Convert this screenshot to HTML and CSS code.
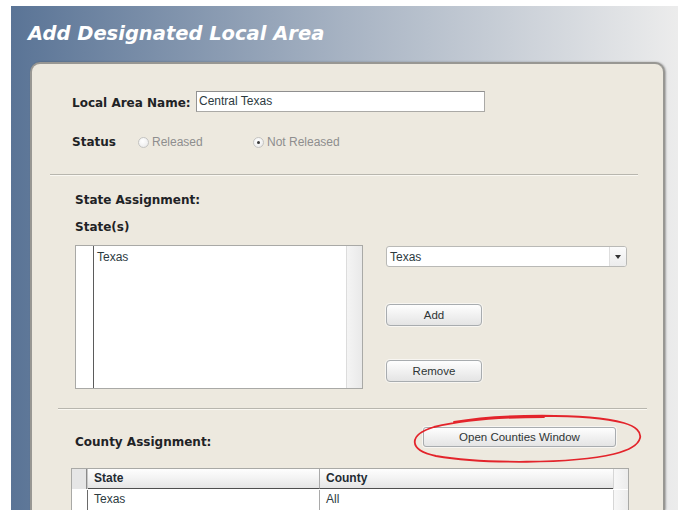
FILE: index.html
```html
<!DOCTYPE html>
<html lang="en">
<head>
<meta charset="utf-8">
<title>Add Designated Local Area</title>
<link rel="stylesheet" href="styles.css">
</head>
<body>
<div class="frame">
  <h1 class="title">Add Designated Local Area</h1>
  <div class="panel">
    <div class="field-row">
      <span class="label name-label">Local Area Name:</span>
      <div class="textbox">Central Texas</div>
    </div>
    <div class="status-row">
      <span class="label status-label">Status</span>
      <span class="radio radio-first"><span class="bullet"></span>Released</span>
      <span class="radio checked"><span class="bullet"></span>Not Released</span>
    </div>
    <div class="rule rule-top"></div>

    <div class="heading heading-first">State Assignment:</div>
    <div class="heading heading-sub">State(s)</div>
    <div class="assign">
      <div class="listbox">
        <div class="gutter"></div>
        <div class="items"><div class="item">Texas</div></div>
        <div class="scroll"></div>
      </div>
      <div class="controls">
        <div class="select"><span class="select-value">Texas</span><span class="arrow"></span></div>
        <button class="btn btn-add" type="button">Add</button>
        <button class="btn btn-remove" type="button">Remove</button>
      </div>
    </div>
    <div class="rule rule-bottom"></div>

    <div class="county-row">
      <span class="label county-label">County Assignment:</span>
      <button class="btn btn-open" type="button">Open Counties Window</button>
      <svg class="mark" width="232" height="52" viewBox="0 0 232 52" aria-hidden="true">
        <path d="M44 9 C90 1 176 0 214 10 C238 17 236 33 204 41 C162 51 72 51 26 43 C-2 37 -2 22 24 14 C62 5 104 4 134 4" fill="none" stroke="#e3242b" stroke-width="1.8" stroke-linecap="round"/>
      </svg>
    </div>

    <div class="grid">
      <div class="grid-head">
        <div class="cell gut"></div>
        <div class="cell col-state">State</div>
        <div class="cell col-county">County</div>
        <div class="cell gscroll"></div>
      </div>
      <div class="grid-row">
        <div class="cell gut"></div>
        <div class="cell col-state">Texas</div>
        <div class="cell col-county">All</div>
        <div class="cell gscroll"></div>
      </div>
    </div>
  </div>
</div>
</body>
</html>
```
FILE: styles.css
```css
body {
  margin: 0;
  background: #fff;
  font-family: "Liberation Sans", Arial, sans-serif;
  font-size: 12px;
  color: #2d3b3f;
}

/* Window frame with its blue-to-grey header wash */
.frame {
  margin: 6px 0 0 11px;
  width: 667px;
  height: 504px;
  overflow: hidden;
  display: flex;
  flex-direction: column;
  background: linear-gradient(90deg, #5a7496 0%, #a7b3c3 50%, #ececec 100%);
}

.title {
  margin: 0;
  height: 56px;
  padding-left: 17px;
  font: italic bold 19.5px/56px "DejaVu Sans", Verdana, sans-serif;
  color: #fff;
}

.panel {
  flex: 1;
  margin-left: 19px;
  width: 635px;
  box-sizing: border-box;
  background: #ede9df;
  border: 2px solid #989793;
  border-bottom: 0;
  border-radius: 10px 10px 0 0;
  box-shadow: 1px 0 2px rgba(0, 0, 0, 0.3);
  padding-top: 27px;
}

.label {
  font: bold 12px "DejaVu Sans", Verdana, sans-serif;
  color: #1f2326;
  flex: none;
}

/* Name row */
.field-row {
  display: flex;
  align-items: center;
  height: 21px;
  padding-left: 40px;
}

.name-label {
  width: 124px;
  padding-top: 2px;
}

.textbox {
  width: 289px;
  height: 21px;
  box-sizing: border-box;
  border: 1px solid #aaa9a6;
  border-top-color: #8f8f8f;
  border-left-color: #939393;
  background: #fff;
  line-height: 19px;
  padding-left: 2px;
  color: #2d3b3f;
}

/* Status radios */
.status-row {
  display: flex;
  align-items: center;
  height: 20px;
  margin-top: 20px;
  padding-left: 40px;
}

.status-label { width: 66px; }

.radio {
  display: flex;
  align-items: center;
  gap: 3px;
  color: #8e8e8e;
}

.radio-first { width: 115px; }

.bullet {
  width: 11px;
  height: 11px;
  box-sizing: border-box;
  border: 1px solid #c4c4c2;
  border-radius: 50%;
  background: radial-gradient(circle at 40% 35%, #fff 0%, #f1f1f1 60%, #e2e2e2 100%);
  display: flex;
  align-items: center;
  justify-content: center;
}

.checked .bullet::after {
  content: "";
  width: 3px;
  height: 3px;
  border-radius: 50%;
  background: #3a3a3a;
}

/* Section dividers */
.rule {
  height: 0;
  border-top: 1px solid #b8b6ae;
  border-bottom: 1px solid #faf8f2;
}

.rule-top {
  margin: 22px 0 0 18px;
  width: 588px;
}

.rule-bottom {
  margin: 19px 0 0 26px;
  width: 589px;
}

/* State assignment */
.heading {
  font: bold 12px/15px "DejaVu Sans", Verdana, sans-serif;
  color: #1f2326;
  padding-left: 43px;
}

.heading-first { margin-top: 17px; }
.heading-sub { margin-top: 12px; }

.assign {
  display: flex;
  gap: 23px;
  margin-top: 10px;
  padding-left: 43px;
}

.listbox {
  width: 288px;
  height: 144px;
  box-sizing: border-box;
  border: 1px solid #a9a9a6;
  background: #fff;
  display: flex;
}

.gutter {
  width: 17px;
  border-right: 1px solid #5b5b5b;
  flex: none;
}

.items {
  flex: 1;
  padding: 2px 0 0 3px;
}

.item {
  line-height: 19px;
  color: #2d3b3f;
}

.scroll {
  width: 15px;
  flex: none;
  border-left: 1px solid #dcdcdc;
  background: linear-gradient(90deg, #f4f4f4, #e9e9e9);
}

.controls {
  display: flex;
  flex-direction: column;
  align-items: flex-start;
  padding-top: 1px;
}

.select {
  width: 241px;
  height: 21px;
  box-sizing: border-box;
  border: 1px solid #b9b9b6;
  border-radius: 3px;
  background: #fff;
  display: flex;
}

.select-value {
  flex: 1;
  padding-left: 3px;
  line-height: 20px;
  color: #2d3b3f;
}

.arrow {
  width: 16px;
  border-left: 1px solid #dedede;
  background: linear-gradient(#fbfbfb, #ececec);
  border-radius: 0 2px 2px 0;
  display: flex;
  align-items: center;
  justify-content: center;
}

.arrow::after {
  content: "";
  border-left: 3px solid transparent;
  border-right: 3px solid transparent;
  border-top: 4px solid #333;
}

.btn {
  height: 22px;
  box-sizing: border-box;
  border: 1px solid #a8acaf;
  border-radius: 4px;
  background: linear-gradient(#fefefe, #f1f1f1 50%, #e4e4e4);
  box-shadow: 0 0 0 1px rgba(255, 255, 255, 0.6);
  font: 11.5px "Liberation Sans", Arial, sans-serif;
  color: #2f3535;
  padding: 0;
  flex: none;
}

.btn-add {
  width: 96px;
  margin-top: 37px;
}

.btn-remove {
  width: 96px;
  margin-top: 34px;
}

/* County assignment */
.county-row {
  position: relative;
  display: flex;
  align-items: flex-start;
  margin-top: 17px;
  padding-left: 43px;
}

.county-label {
  width: 348px;
  margin-top: 8px;
  line-height: 15px;
}

.btn-open {
  width: 193px;
  height: 20px;
  border-radius: 3px;
}

/* Hand-drawn highlight round the counties button */
.mark {
  position: absolute;
  left: 378px;
  top: -14px;
  overflow: visible;
  pointer-events: none;
}

/* County grid */
.grid {
  margin: 18px 0 0 39px;
  width: 558px;
  box-sizing: border-box;
  border: 1px solid #a9a9a6;
  border-bottom: 0;
  background: #fff;
}

.grid-head,
.grid-row {
  display: flex;
}

.grid-head {
  height: 20px;
  background: linear-gradient(#fefefe, #f2f2f2 50%, #e3e3e3);
}

.grid-row {
  height: 20px;
  padding-top: 1px;
}

.cell {
  box-sizing: border-box;
  line-height: 19px;
  padding-left: 6px;
  flex: none;
}

.gut {
  width: 16px;
  padding: 0;
  border-right: 1px solid #6a6a6a;
}

.grid-head .gut {
  background: #e6e6e6;
  border-right: 1px solid #c8c8c8;
  box-shadow: inset -1px 0 0 #8b8b8b;
}

.col-state {
  width: 232px;
  border-right: 1px solid #a9a9a9;
}

.col-county {
  width: 293px;
}

.grid-head .col-state,
.grid-head .col-county {
  font: bold 12px/19px "Liberation Sans", Arial, sans-serif;
  color: #1f2b33;
  border-bottom: 1px solid #4d4d4d;
}

.gscroll {
  flex: 1;
  padding: 0;
  border-left: 1px solid #d6d6d6;
  background: linear-gradient(90deg, #f7f7f7, #ececec);
}
```
